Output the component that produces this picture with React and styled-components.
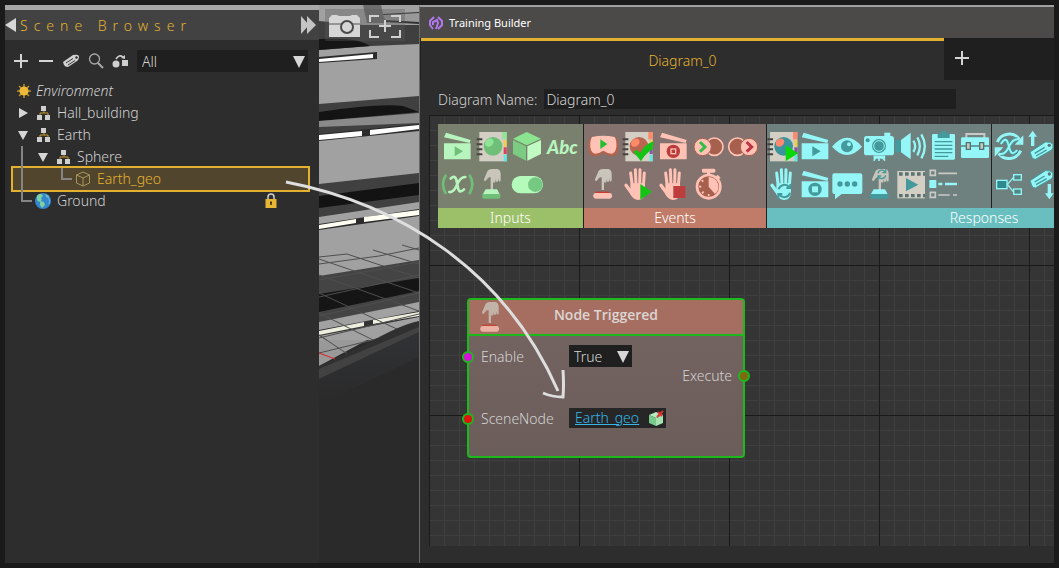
import React from 'react';
import styled, { createGlobalStyle } from 'styled-components';

const Global = createGlobalStyle`
  *, *::before, *::after { box-sizing: border-box; }
  body { margin: 0; background: #1a1a1a; }
  body, button, input, select { font-family: "Noto Sans", "Open Sans", sans-serif; font-size: 14px; font-weight: 300; }
  button { border: 0; padding: 0; background: none; color: inherit; cursor: pointer; display: block; }
  svg { display: block; }
`;

const Frame = styled.div`
  position: relative;
  display: flex;
  min-height: 100vh;
  padding: 5px;
  background: #1a1a1a;
  color: #d2d2d2;
  overflow: hidden;
`;

/* ---------- scene browser ---------- */
const Sidebar = styled.aside`
  flex: 0 0 314px;
  background: #2d2d2d;
  border-top: 5px solid #a6a6a6;
`;
const SidebarHeader = styled.header`
  display: flex;
  align-items: center;
  height: 30px;
  padding-right: 2px;
  background: #424242;
`;
const SidebarTitle = styled.h1`
  flex: 1;
  margin: 0 0 0 4px;
  font-size: 14px;
  font-weight: 300;
  letter-spacing: 6px;
  color: #e3b130;
`;
const Toolbar = styled.div`
  display: flex;
  align-items: center;
  gap: 5px;
  padding: 10px 11px 8px 6px;
`;
const ToolButton = styled.button`
  width: 20px;
  height: 20px;
`;
const SelectWrap = styled.div`
  position: relative;
  flex: ${p => (p.$grow ? '1' : 'none')};
  width: ${p => (p.$grow ? 'auto' : '63px')};
  margin-left: ${p => (p.$grow ? '1px' : '0')};
  svg { position: absolute; right: 3px; top: 6px; pointer-events: none; }
`;
const Select = styled.select`
  display: block;
  width: 100%;
  height: 22px;
  padding: 0 5px;
  border: 0;
  border-radius: 0;
  appearance: none;
  background: #1f1f1f;
  color: #d6d6d6;
`;
const Tree = styled.ul`
  margin: 0;
  padding: 0;
  list-style: none;
`;
const TreeRow = styled.li`
  position: relative;
  display: flex;
  align-items: center;
  height: ${p => (p.$selected ? '26px' : '22px')};
  margin: ${p => (p.$selected ? '-2px 9px -2px 6px' : '0')};
  padding-left: ${p => p.$indent}px;
  padding-right: ${p => (p.$selected ? '0' : '42px')};
  border: ${p => (p.$selected ? '2px solid #e3b130' : '0')};
  background: ${p => (p.$selected ? '#51462d' : 'transparent')};
  color: ${p => (p.$selected ? '#e3b130' : '#d2d2d2')};
  font-style: ${p => (p.$italic ? 'italic' : 'normal')};
`;
const RowIcon = styled.span`
  flex: 0 0 ${p => p.$w || 20}px;
`;
const RowName = styled.span`
  flex: 1;
  line-height: 22px;
`;
const Guides = styled.svg`
  position: absolute;
  left: 16px;
  top: 66px;
`;
const TreeBox = styled.div`
  position: relative;
`;

/* ---------- viewport ---------- */
const Viewport = styled.section`
  position: relative;
  flex: 0 0 100px;
  background: #2b2b2b;
  overflow: hidden;
`;
const ViewTools = styled.div`
  position: absolute;
  top: 4px;
  left: 6px;
  display: flex;
  background: rgba(90, 90, 90, 0.35);
`;

/* ---------- builder window ---------- */
const Builder = styled.main`
  flex: 1;
  min-width: 0;
  display: flex;
  flex-direction: column;
  padding-bottom: 17px;
  border-top: 2px solid #a0a0a0;
  border-left: 1px solid #6a6a6a;
  background: #2d2d2d;
  overflow: hidden;
`;
const TitleBar = styled.header`
  display: flex;
  align-items: center;
  gap: 5px;
  height: 31px;
  padding-left: 8px;
  background: #4c4a48;
  color: #fff;
  font-size: 11px;
  font-weight: 400;
`;
const Tabs = styled.nav`
  display: flex;
  height: 42px;
  background: #1f1f1f;
`;
const Tab = styled.button`
  flex: 1;
  margin-left: 1px;
  border-top: 3px solid #e3b130;
  background: #2d2d2d;
  color: #e3b130;
`;
const AddTab = styled.button`
  flex: 0 0 110px;
  padding: 0 0 2px 8px;
`;
const NameRow = styled.div`
  display: flex;
  align-items: center;
  gap: 7px;
  padding: 9px 98px 6px 18px;
`;
const NameInput = styled.input`
  flex: 1;
  min-width: 0;
  height: 20px;
  padding: 0 2px;
  border: 0;
  background: #1f1f1f;
  color: #d6d6d6;
`;
const Canvas = styled.section`
  position: relative;
  flex: 1;
  min-height: 431px;
  margin-left: 9px;
  padding: 9px 0 0 9px;
  background-color: #353535;
  background-image:
    linear-gradient(90deg, #1a1a1a 1px, transparent 1px),
    linear-gradient(#1a1a1a 1px, transparent 1px),
    linear-gradient(90deg, #3f3f3f 1px, transparent 1px),
    linear-gradient(#3f3f3f 1px, transparent 1px);
  background-size: 150px 150px, 150px 150px, 15px 15px, 15px 15px;
  overflow: hidden;
`;

/* ---------- palette ---------- */
const Palette = styled.div`
  display: flex;
`;
const Group = styled.section`
  flex: none;
  width: ${p => p.$w}px;
  border-right: 1px solid #1f1f1f;
  background: ${p => p.$bg};
`;
const GroupBody = styled.div`
  display: flex;
  height: 84px;
`;
const IconGrid = styled.div`
  display: grid;
  grid-template-columns: repeat(${p => p.$cols}, ${p => p.$cell}px);
  grid-auto-rows: 38px;
  padding-top: 4px;
  padding-left: ${p => p.$pad || 0}px;
  border-right: ${p => (p.$divided ? '1px solid #1f1f1f' : '0')};
`;
const GroupLabel = styled.h2`
  margin: 0;
  height: 20px;
  line-height: 20px;
  font-size: 14px;
  font-weight: 300;
  text-align: center;
  color: #fff;
  background: ${p => p.$bg};
`;

/* ---------- node ---------- */
const Node = styled.article`
  position: absolute;
  left: 38px;
  top: 183px;
  width: 278px;
  height: 160px;
  border: 2px solid #1bb91b;
  border-radius: 4px;
  background: linear-gradient(#756562, #6b5d5a);
`;
const NodeHeader = styled.header`
  display: flex;
  align-items: center;
  height: 36px;
  border-bottom: 2px solid #1bb91b;
  background: #a66e60;
`;
const NodeIcon = styled.span`
  flex: 0 0 44px;
  padding-left: 4px;
`;
const NodeTitle = styled.h3`
  flex: 1;
  margin: 0 44px 0 0;
  padding-bottom: 4px;
  font-family: "Open Sans", "Noto Sans", sans-serif;
  font-size: 14px;
  font-weight: 600;
  line-height: 20px;
  text-align: center;
  color: #dcd6d4;
`;
const NodeBody = styled.div`
  display: flex;
  padding: 9px 11px 0 12px;
`;
const Inputs = styled.div`
  flex: 1;
  display: grid;
  grid-template-columns: 88px 1fr;
  grid-auto-rows: 22px;
  row-gap: 40px;
  align-items: center;
`;
const Output = styled.div`
  padding-top: 20px;
  line-height: 22px;
`;
const Port = styled.i`
  position: absolute;
  left: ${p => (p.$right ? 'auto' : '-7px')};
  right: ${p => (p.$right ? '-7px' : 'auto')};
  top: ${p => p.$y}px;
  width: 12px;
  height: 12px;
  border: 2px solid #1bb91b;
  border-radius: 50%;
  background: ${p => p.$c};
`;
const Reference = styled.div`
  display: flex;
  align-items: center;
  justify-content: space-between;
  width: 97px;
  height: 20px;
  padding: 0 1px 0 6px;
  background: #262626;
`;
const Link = styled.a`
  color: #35b5e8;
  line-height: 20px;
`;
const Arrow = styled.svg`
  position: absolute;
  left: 0;
  top: 0;
  pointer-events: none;
`;

/* ---------- small drawings ---------- */
const Tri = ({ dir = 'down', w = 12, h = 12 }) => (
  <svg width={w} height={h} viewBox="0 0 12 12" preserveAspectRatio="none" fill="#d6d6d6">
    <path d={dir === 'down' ? 'M0 0H12L6 12Z' : dir === 'left' ? 'M12 0V12L0 6Z' : 'M0 0V12L12 6Z'} />
  </svg>
);
const Plus = () => (
  <svg width="20" height="20" viewBox="0 0 20 20" stroke="#d4d4d4" strokeWidth="2"><path d="M3 10H17M10 3V17" /></svg>
);
const Hierarchy = () => (
  <svg width="14" height="14" viewBox="0 0 14 14">
    <path d="M7 4V7M3 10V7H11V10" fill="none" stroke="#c99a2e" />
    <path d="M4 0H9V5H4ZM0 9H5V14H0ZM8 9H13V14H8Z" fill="#cfcfcf" />
  </svg>
);
const Sun = () => (
  <svg width="16" height="16" viewBox="0 0 16 16">
    <path d="M8 1V15M1 8H15M3 3L13 13M13 3L3 13" stroke="#b98f2c" strokeWidth="1.500" />
    <circle cx="8" cy="8" r="4.600" fill="#eeb93a" />
  </svg>
);
const WireCube = () => (
  <svg width="16" height="16" viewBox="0 0 16 16" fill="none" stroke="#a8975b" strokeLinejoin="round">
    <path d="M1.500 4L8 1L14.500 4V12L8 15L1.500 12ZM1.500 4L8 7L14.500 4M8 7V15" />
  </svg>
);
const Globe = () => (
  <svg width="16" height="16" viewBox="0 0 16 16">
    <circle cx="8" cy="8" r="8" fill="#3287cf" />
    <path d="M2 3C4 0 8 1 8 3L6 5L7 7L4 9L2 7ZM5 8L9 9L10 12L7 15L5 12Z" fill="#7fd0a0" />
    <path d="M10 1L14 3L12 5Z" fill="#7fd0a0" />
    <path d="M11 2a8 8 0 0 1 3 9" fill="none" stroke="#69b9ee" />
  </svg>
);
const Lock = () => (
  <svg width="12" height="16" viewBox="0 0 12 16">
    <path d="M3 7V4a3 3 0 0 1 6 0V7" fill="none" stroke="#cfcfcf" strokeWidth="1.500" />
    <rect x="0.500" y="6" width="11" height="9" fill="#e8b636" />
    <path d="M6 8.500V12M5 9.500H7" stroke="#3c2f0a" strokeWidth="1.500" />
  </svg>
);

/* ---------- palette drawings, three units to a pixel ---------- */
const palettes = {
  green: { light: '#b8f5be', mid: '#8fe595', dark: '#6fbf78' },
  pink: { light: '#ffc2b5', mid: '#f09a86', dark: '#a8604e' },
  cyan: { light: '#94f6f6', mid: '#6fd6d8', dark: '#43999c' },
};
const Clapper = ({ c, kind }) => (
  <g>
    <path d="M12 46H92V94H12ZM18 14L92 36L89 45L12 28Z" fill={c.light} />
    {kind === 'play' && <path d="M44 55L69 70L44 85Z" fill={c.dark} />}
    {kind === 'stop' && (
      <g>
        <circle cx="52" cy="70" r="20" fill={c === palettes.pink ? '#b93b3b' : c.dark} />
        <rect x="43" y="61" width="18" height="18" fill={c.light} />
        {c === palettes.pink && <rect x="47" y="65" width="10" height="10" fill="#b93b3b" />}
      </g>
    )}
  </g>
);
const Book = ({ c, badge }) => (
  <g>
    <rect x="13" y="12" width="82" height="88" fill="#d3cfc4" />
    <path d="M5 34H22M5 49H22M5 64H22M5 79H22" stroke="#45423f" strokeWidth="6" />
    <path d="M82 12H95V34H82Z" fill={c.mid} />
    <path d="M86 36H95V56H86Z" fill="#f3cb4b" />
    <path d="M86 58H95V78H86Z" fill={badge ? '#8952a8' : '#e04058'} />
    <path d="M86 80H95V100H86Z" fill="#5de8e6" />
    <circle cx="54" cy="55" r="28" fill={c.dark} />
    <ellipse cx="43" cy="44" rx="14" ry="11" fill={c.mid} transform="rotate(-40 43 44)" />
    {badge === 'check' && <path d="M37 71L47 65L57 76Q70 50 97 40L95 64Q72 78 60 100Z" fill="#14c414" />}
    {badge === 'play' && <path d="M60 52L97 76L60 100Z" fill="#08d808" />}
  </g>
);
const Press = ({ c, base, turn }) => (
  <g>
    <path d="M38 14Q42 9 50 9H68Q77 12 77 24V44Q74 49 71 44V36L69 46Q66 50 63 46V38L61 48Q58 52 54 48V72H47V34Q40 32 36 40Q32 47 28 44Q25 40 30 33Z" fill="#c9c5ba" />
    {base === 'flat'
      ? <g><rect x="28" y="77" width="42" height="8" fill="#c83a34" /><rect x="22" y="81" width="56" height="17" rx="7" fill={c.light} /></g>
      : <g><path d="M32 70H66L76 88H22Z" fill={c.light} /><path d="M22 84H76V94Q76 98 70 98H28Q22 98 22 94Z" fill={c.dark} /></g>}
    {turn && <path d="M45 22a12 12 0 0 1 22-4M68 28a12 12 0 0 1-22 4M68 10V20H58M45 40V30H55" fill="none" stroke={c.dark} strokeWidth="4" />}
  </g>
);
const Hand = ({ c, badge }) => (
  <g>
    <g stroke={c.light} strokeWidth="9" strokeLinecap="round" fill="none">
      <path d="M34 60L29 21M45 56L43 11M56 56L57 11M67 60L70 21" />
      <path d="M34 84L15 58" strokeWidth="10" />
    </g>
    <path d="M29 52H72V74Q73 101 50 102Q34 100 27 82Z" fill={c.light} />
    {badge === 'play' && <path d="M58 54L93 77L58 101Z" fill="#14c414" />}
    {badge === 'stop' && <rect x="52" y="60" width="36" height="36" fill="#bd3c3c" />}
    {badge === 'turn' && <path d="M35 70a18 18 0 0 1 32-6M69 80a18 18 0 0 1-32 6M70 54V66H58M34 98V84H46" fill="none" stroke={c.dark} strokeWidth="6" />}
  </g>
);
const Tag = ({ c, y }) => (
  <g transform={`translate(0 ${y})`}>
    <path d="M18 66L64 36Q80 34 87 43Q88 54 83 60L34 88Q28 88 24 82Z" fill={c.light} stroke={c.dark} strokeWidth="3" />
    <circle cx="76" cy="46" r="5" fill="#5e7472" />
    <path d="M32 70L62 52M36 78L68 60" stroke={c.dark} strokeWidth="4" />
  </g>
);
const g = palettes.green;
const p = palettes.pink;
const c = palettes.cyan;

const inputIcons = [
  ['Play clip', <Clapper c={g} kind="play" />],
  ['Material', <Book c={g} />],
  ['Scene node', <g><path d="M50 12L93 32L50 52L9 32Z" fill="#8be48f" /><path d="M9 36L48 55V98L9 78Z" fill="#7ccb82" /><path d="M93 36L52 55V98L93 78Z" fill="#c0fbc4" /></g>],
  ['Text', <text x="52" y="79" textAnchor="middle" fontFamily='Lato, "Open Sans", sans-serif' fontSize="56" fontWeight="900" fontStyle="italic" fill={g.light}>Abc</text>],
  ['Variable', <g><path d="M18 26Q0 54 18 84M88 26Q106 54 88 84" fill="none" stroke={g.dark} strokeWidth="8" /><path d="M32 38Q46 24 50 46L54 66Q58 84 72 70M76 33Q62 32 52 54Q42 80 28 78" fill="none" stroke={g.light} strokeWidth="8" strokeLinecap="round" /></g>],
  ['Touch', <Press c={g} />],
  ['Toggle', <g><rect x="5" y="30" width="94" height="52" rx="26" fill="#b4fabb" /><circle cx="76" cy="56" r="22" fill="#75c983" /></g>],
];
const eventIcons = [
  ['Headset', <g><path d="M14 28Q52 20 90 28Q97 36 97 54Q96 82 84 83H66L52 74L38 83H20Q8 82 7 54Q7 36 14 28Z" fill="#b5614c" /><path d="M18 27Q52 20 86 27Q93 38 91 58Q88 77 76 77Q66 77 52 68Q38 77 28 77Q16 77 13 58Q11 38 18 27Z" fill={p.light} /><path d="M43 34L64 48L43 63Z" fill="#20c030" /></g>],
  ['Material applied', <Book c={{ ...p, mid: '#ff8a68', dark: '#ba6550' }} badge="check" />],
  ['Clip stopped', <Clapper c={p} kind="stop" />],
  ['Enter', <g><circle cx="70" cy="56" r="26" fill="#a8604e" stroke={p.light} strokeWidth="5" /><circle cx="35" cy="57" r="26" fill={p.light} stroke="#a8604e" strokeWidth="3" /><path d="M27 42L42 57L27 71" fill="none" stroke="#34bd46" strokeWidth="9" /></g>],
  ['Leave', <g><circle cx="34" cy="56" r="26" fill="#a8604e" stroke={p.light} strokeWidth="5" /><circle cx="69" cy="57" r="26" fill={p.light} stroke="#a8604e" strokeWidth="3" /><path d="M62 42L77 57L62 71" fill="none" stroke="#bd3540" strokeWidth="9" /></g>],
  ['Node triggered', <Press c={p} base="flat" />],
  ['Hand start', <Hand c={p} badge="play" />],
  ['Hand stop', <Hand c={p} badge="stop" />],
  ['Timer', <g><rect x="33" y="8" width="40" height="12" rx="4" fill={p.light} /><path d="M48 18H58V28H48Z" fill={p.light} /><path d="M77 29L86 38" stroke={p.light} strokeWidth="8" /><circle cx="53" cy="62" r="35" fill="#a8604e" stroke={p.light} strokeWidth="8" /><path d="M53 62V33A29 29 0 0 1 72 84Z" fill={p.light} /><path d="M24 62H31M53 91V84M32 42L37 47M33 82L38 77" stroke={p.light} strokeWidth="5" /></g>],
];
const responseIcons = [
  ['Apply material', <g transform="translate(-4 0)"><Book c={{ ...c, mid: '#ff8870', dark: '#3b949c' }} badge="play" /></g>],
  ['Play clip', <g transform="translate(-4 0)"><Clapper c={c} kind="play" /></g>],
  ['Show', <g><path d="M3 56Q48 2 93 56Q48 106 3 56Z" fill={c.light} /><circle cx="48" cy="55" r="18" fill={c.dark} /><circle cx="54" cy="49" r="6" fill={c.light} /></g>],
  ['Camera', <g><path d="M64 14H82V26H64Z" fill={c.light} /><rect x="3" y="24" width="90" height="58" rx="8" fill={c.light} /><circle cx="14" cy="37" r="6" fill={c.dark} /><circle cx="48" cy="54" r="21" fill={c.dark} /><circle cx="48" cy="54" r="16" fill="none" stroke={c.light} strokeWidth="3" /><path d="M34 85H64V90H34ZM38 90L32 98M48 90V99M59 90L66 98" stroke={c.light} strokeWidth="5" /></g>],
  ['Sound', <g><rect x="0" y="36" width="17" height="37" fill={c.dark} /><path d="M18 36L47 14V94L18 73Z" fill={c.light} /><path d="M55 38Q66 55 55 72M67 28Q82 55 67 82M79 19Q100 55 79 91" fill="none" stroke={c.light} strokeWidth="7" /></g>],
  ['Notes', <g><rect x="15" y="18" width="69" height="77" rx="4" fill={c.light} /><path d="M32 17H40Q42 8 50 8Q58 8 60 17H68V30H32Z" fill={c.dark} /><path d="M23 41H76M23 52H76M23 63H76M23 74H76M23 85H64" stroke={c.dark} strokeWidth="4" /></g>],
  ['Toolbox', <g><path d="M22 30V18H76V30" fill="none" stroke="#c9cac6" strokeWidth="6" /><rect x="6" y="28" width="84" height="62" rx="4" fill={c.light} /><path d="M6 54H90" stroke="#4d7675" strokeWidth="4" /><path d="M22 44H34V64H22ZM62 44H74V64H62Z" fill="#c9c5ba" stroke="#4d7675" strokeWidth="4" /></g>],
  ['Hand reset', <Hand c={c} badge="turn" />],
  ['Stop clip', <g transform="translate(-4 0)"><Clapper c={c} kind="stop" /></g>],
  ['Message', <g><path d="M10 22H88Q94 22 94 28V78Q94 84 88 84H32L12 100V84H10Q4 84 4 78V28Q4 22 10 22Z" fill={c.light} /><g fill={c.dark}><circle cx="27" cy="54" r="8" /><circle cx="49" cy="54" r="8" /><circle cx="71" cy="54" r="8" /></g></g>],
  ['Touch reset', <Press c={c} turn />],
  ['Video', <g><rect x="7" y="15" width="83" height="82" fill="#d3cfc4" /><path d="M12 24H90M12 89H90" stroke="#5a7270" strokeWidth="10" strokeDasharray="11 7" /><path d="M33 36L70 56L33 76Z" fill={c.dark} /></g>],
  ['Checklist', <g fill="none" strokeWidth="5"><path d="M10 13H25V28H10ZM10 79H25V94H10Z" stroke="#c9cac6" /><path d="M34 22H90M34 87H68M78 87H90" stroke="#c9cac6" /><path d="M7 42H28V66H7Z" fill={c.light} /><path d="M34 54H46M54 54H90" stroke={c.light} strokeWidth="7" /></g>],
];
const extraIcons = [
  ['Change variable', <g><path d="M16 42A38 38 0 0 1 82 34M86 68A38 38 0 0 1 20 76" fill="none" stroke={c.light} strokeWidth="9" /><path d="M94 22V50H68ZM8 86V58H34Z" fill={c.light} /><path d="M28 46Q42 24 48 46L54 66Q60 84 74 68M76 34Q62 34 52 54Q40 80 26 78" fill="none" stroke={c.dark} strokeWidth="12" /><path d="M28 46Q42 24 48 46L54 66Q60 84 74 68M76 34Q62 34 52 54Q40 80 26 78" fill="none" stroke={c.light} strokeWidth="6" strokeLinecap="round" /></g>],
  ['Raise tag', <g><Tag c={c} y={6} /><path d="M26 8L39 26H31V54H21V26H13Z" fill={c.light} /></g>],
  ['Link nodes', <g fill="none" stroke={c.light} strokeWidth="4"><path d="M46 55L64 35M46 55L64 77" /><rect x="14" y="43" width="31" height="25" fill="#2f898c" /><rect x="65" y="26" width="23" height="16" fill="#4f8788" /><rect x="65" y="69" width="23" height="16" fill="#4f8788" /></g>],
  ['Lower tag', <g><Tag c={c} y={-22} /><path d="M76 100L63 82H71V54H81V82H89Z" fill={c.light} /></g>],
];

const Icons = ({ items, cell, ...rest }) => (
  <IconGrid $cell={cell} {...rest}>
    {items.map(([name, art]) => (
      <button key={name} aria-label={name} title={name}>
        <svg width={cell} height="38" viewBox={`0 0 ${cell * 3} 114`}>{art}</svg>
      </button>
    ))}
  </IconGrid>
);

const Hall = () => (
  <svg width="100" height="558" viewBox="0 0 100 558">
    <defs>
      <linearGradient id="slope" x1="0" y1="0" x2="0" y2="1">
        <stop offset="0" stopColor="#303235" /><stop offset="1" stopColor="#2a2a2a" />
      </linearGradient>
    </defs>
    <rect width="100" height="335" fill="#a1a1a1" />
    <path d="M44 0H62L66 18H48Z" fill="#6d6d6d" />
    <path d="M64 9L100 7V19L66 17Z" fill="#333" /><path d="M64 10L100 8V17L66 15Z" fill="#999" />
    <path d="M0 16L44 20L100 20V39L52 41L0 45Z" fill="#3f3f3f" />
    <path d="M0 34Q40 32 51 41L0 45Z" fill="#161616" />
    <path d="M0 52L58 47V54L0 58Z" fill="#2c2c2c" /><path d="M0 54L54 49V53L0 57Z" fill="#fff" />
    <path d="M0 99L100 91V122L0 132Z" fill="#404040" />
    <path d="M0 107Q60 98 84 101L100 107L0 116Z" fill="#141414" />
    <path d="M0 116L100 108V118L0 122Z" fill="#8a8a8a" />
    <path d="M0 129L100 119V126L0 136Z" fill="#2c2c2c" />
    <path d="M0 130L43 126V131L0 135ZM51 125L100 120V124L51 130Z" fill="#fff" />
    <path d="M0 179L100 168V197L0 212Z" fill="#404040" />
    <path d="M0 191L100 178V190L0 203Z" fill="#131313" />
    <path d="M0 219L100 204V211L0 225Z" fill="#2c2c2c" />
    <path d="M0 220L37 214V218L0 224ZM45 212L100 205V210L45 217Z" fill="#fffff4" />
    <path d="M0 271L100 255V297L0 317Z" fill="#444" />
    <path d="M0 289L100 273V286L0 307Z" fill="#151515" />
    <path d="M0 325L100 306V312L0 331Z" fill="#333" />
    <path d="M0 326L45 317V321L0 330ZM54 315L100 307V311L54 319Z" fill="#eeeede" />
    <g stroke="#4f4f4f" fill="none">
      <path d="M0 252L28 249M0 259L60 251L100 243M0 275L100 257M0 292L100 270M0 311L100 288M0 333L100 309M0 348L70 331" />
      <path d="M0 254L100 288M28 249L100 273M54 245L100 259M83 240L100 245M0 270L100 306M0 288L80 325M0 308L56 336M0 330L30 350" />
    </g>
    <path d="M0 335H48L0 361Z" fill="#999" />
    <path d="M0 348L70 331M0 330L30 350" stroke="#4f4f4f" />
    <path d="M0 361L46 340Q80 320 100 316V558H0Z" fill="#303030" />
    <path d="M0 364L100 322V327L0 374Z" fill="#424242" />
    <path d="M0 374L100 327V352L0 400Z" fill="url(#slope)" />
    <path d="M0 400L100 352V558H0Z" fill="#2a2a2a" />
    <path d="M0 348L16 354" stroke="#e02020" />
  </svg>
);

export default function App() {
  return (
    <Frame>
      <Global />
      <Sidebar>
        <SidebarHeader>
          <button aria-label="Collapse left"><Tri dir="left" w={11} h={14} /></button>
          <SidebarTitle>Scene Browser</SidebarTitle>
          <button aria-label="Expand right">
            <svg width="17" height="18" viewBox="0 0 17 18" fill="#c4c4c4"><path d="M1 0L9 9L1 18ZM7 0L16 9L7 18Z" /></svg>
          </button>
        </SidebarHeader>
        <Toolbar>
          <ToolButton aria-label="Add"><Plus /></ToolButton>
          <ToolButton aria-label="Remove"><svg width="20" height="20" stroke="#d4d4d4" strokeWidth="2"><path d="M3 10H17" /></svg></ToolButton>
          <ToolButton aria-label="Tag">
            <svg width="20" height="20" viewBox="0 0 20 20"><path d="M2 11L12 4Q17 3 18 5Q18 9 16 10L7 16Q4 16 3 14Z" fill="#cfcfcf" /><path d="M5 12L12 7.500M7 14L14 9.500" stroke="#3a3a3a" /><circle cx="15.500" cy="6.500" r="1.200" fill="#2d2d2d" /></svg>
          </ToolButton>
          <ToolButton aria-label="Search">
            <svg width="20" height="20" viewBox="0 0 20 20" fill="none" stroke="#a9a9a9"><circle cx="8.500" cy="8" r="5" strokeWidth="1.300" /><path d="M12 12L17 17" strokeWidth="2" /></svg>
          </ToolButton>
          <ToolButton aria-label="Replace">
            <svg width="20" height="20" viewBox="0 0 20 20"><circle cx="5" cy="13" r="3.500" fill="#cfcfcf" /><path d="M11 9H17V15H11Z" fill="#cfcfcf" /><path d="M5 8Q8 3 12 6" fill="none" stroke="#cfcfcf" strokeWidth="1.500" /><path d="M10 7L14 8V4Z" fill="#cfcfcf" /></svg>
          </ToolButton>
          <SelectWrap $grow>
            <Select aria-label="Filter"><option>All</option></Select>
            <Tri />
          </SelectWrap>
        </Toolbar>
        <TreeBox>
          <Tree>
            <TreeRow $indent={11} $italic><RowIcon><Sun /></RowIcon><RowName>Environment</RowName></TreeRow>
            <TreeRow $indent={14}><RowIcon $w={18}><Tri dir="right" w={9} h={10} /></RowIcon><RowIcon><Hierarchy /></RowIcon><RowName>Hall_building</RowName></TreeRow>
            <TreeRow $indent={13}><RowIcon $w={19}><Tri w={10} h={9} /></RowIcon><RowIcon><Hierarchy /></RowIcon><RowName>Earth</RowName></TreeRow>
            <TreeRow $indent={33}><RowIcon $w={19}><Tri w={10} h={9} /></RowIcon><RowIcon><Hierarchy /></RowIcon><RowName>Sphere</RowName></TreeRow>
            <TreeRow $indent={62} $selected><RowIcon $w={22}><WireCube /></RowIcon><RowName>Earth_geo</RowName></TreeRow>
            <TreeRow $indent={30}><RowIcon $w={22}><Globe /></RowIcon><RowName>Ground</RowName><Lock /></TreeRow>
          </Tree>
          <Guides width="60" height="60" viewBox="0 0 60 60" fill="none" stroke="#858585" strokeWidth="2">
            <path d="M1 0V55H11M41 22V33H51" />
          </Guides>
        </TreeBox>
      </Sidebar>

      <Viewport>
        <Hall />
        <ViewTools>
          <button aria-label="Snapshot">
            <svg width="40" height="32" viewBox="0 0 40 32"><path d="M4 9L7 6H12L14 7H25L27 6H32L35 9V28H4Z" fill="#d6d6d6" /><path d="M4 15H35" stroke="#555" /><circle cx="22" cy="18" r="6" fill="#d6d6d6" stroke="#4a4a4a" strokeWidth="2" /></svg>
          </button>
          <button aria-label="Focus">
            <svg width="40" height="32" viewBox="0 0 40 32" fill="none" stroke="#d0d0d0" strokeWidth="2"><path d="M5 13V7H14M26 7H35V13M35 21V28H26M14 28H5V21M14 17H26M20 11V23" /></svg>
          </button>
        </ViewTools>
      </Viewport>

      <Builder>
        <TitleBar>
          <svg width="16" height="16" viewBox="0 0 16 16" fill="none" stroke="#b277ee" strokeWidth="2">
            <path d="M5 14L2 10V6L6 2M10 2L14 6V10L10 14M5 10V7L9 5L10 8L8 14" />
          </svg>
          Training Builder
        </TitleBar>
        <Tabs>
          <Tab>Diagram_0</Tab>
          <AddTab aria-label="Add diagram"><Plus /></AddTab>
        </Tabs>
        <NameRow>
          <label htmlFor="diagram-name">Diagram Name:</label>
          <NameInput id="diagram-name" defaultValue="Diagram_0" />
        </NameRow>
        <Canvas>
          <Palette>
            <Group $w={146} $bg="#79816e">
              <GroupBody><Icons items={inputIcons} cell={35} $cols={4} $pad={2} /></GroupBody>
              <GroupLabel $bg="#9bc069">Inputs</GroupLabel>
            </Group>
            <Group $w={183} $bg="#83726e">
              <GroupBody><Icons items={eventIcons} cell={35} $cols={5} $pad={2} /></GroupBody>
              <GroupLabel $bg="#c17c69">Events</GroupLabel>
            </Group>
            <Group $w={435} $bg="#6e817f">
              <GroupBody>
                <Icons items={responseIcons} cell={32} $cols={7} $divided />
                <Icons items={extraIcons} cell={32} $cols={2} />
              </GroupBody>
              <GroupLabel $bg="#69bfc0">Responses</GroupLabel>
            </Group>
          </Palette>
          <Node>
            <NodeHeader>
              <NodeIcon><svg width="35" height="36" viewBox="0 0 105 108" opacity="0.8"><Press c={p} base="flat" /></svg></NodeIcon>
              <NodeTitle>Node Triggered</NodeTitle>
            </NodeHeader>
            <NodeBody>
              <Inputs>
                <label htmlFor="enable">Enable</label>
                <SelectWrap>
                  <Select id="enable"><option>True</option></Select>
                  <Tri />
                </SelectWrap>
                <span>SceneNode</span>
                <Reference>
                  <Link href="#earth-geo">Earth_geo</Link>
                  <svg width="17" height="17" viewBox="0 0 17 17">
                    <path d="M1 5L8 2L15 5L8 8Z" fill="#b4eabc" /><path d="M1 5L8 8V16L1 13Z" fill="#79c98a" /><path d="M15 5L8 8V16L15 13Z" fill="#a7e3ae" />
                    <path d="M15 1L10 6M10 2L14 6M9 7L11 5" stroke="#e03030" strokeWidth="2" />
                  </svg>
                </Reference>
              </Inputs>
              <Output>Execute</Output>
            </NodeBody>
            <Port $y={51} $c="#d810d8" />
            <Port $y={113} $c="#e01010" />
            <Port $right $y={70} $c="#7d6a10" />
          </Node>
        </Canvas>
      </Builder>

      <Arrow width="600" height="420" viewBox="0 0 600 420" fill="none" stroke="#dedede" strokeWidth="3">
        <path d="M286 182C400 204 505 270 558 391M543 393Q552 397 563 397Q564 385 563 370" />
      </Arrow>
    </Frame>
  );
}
